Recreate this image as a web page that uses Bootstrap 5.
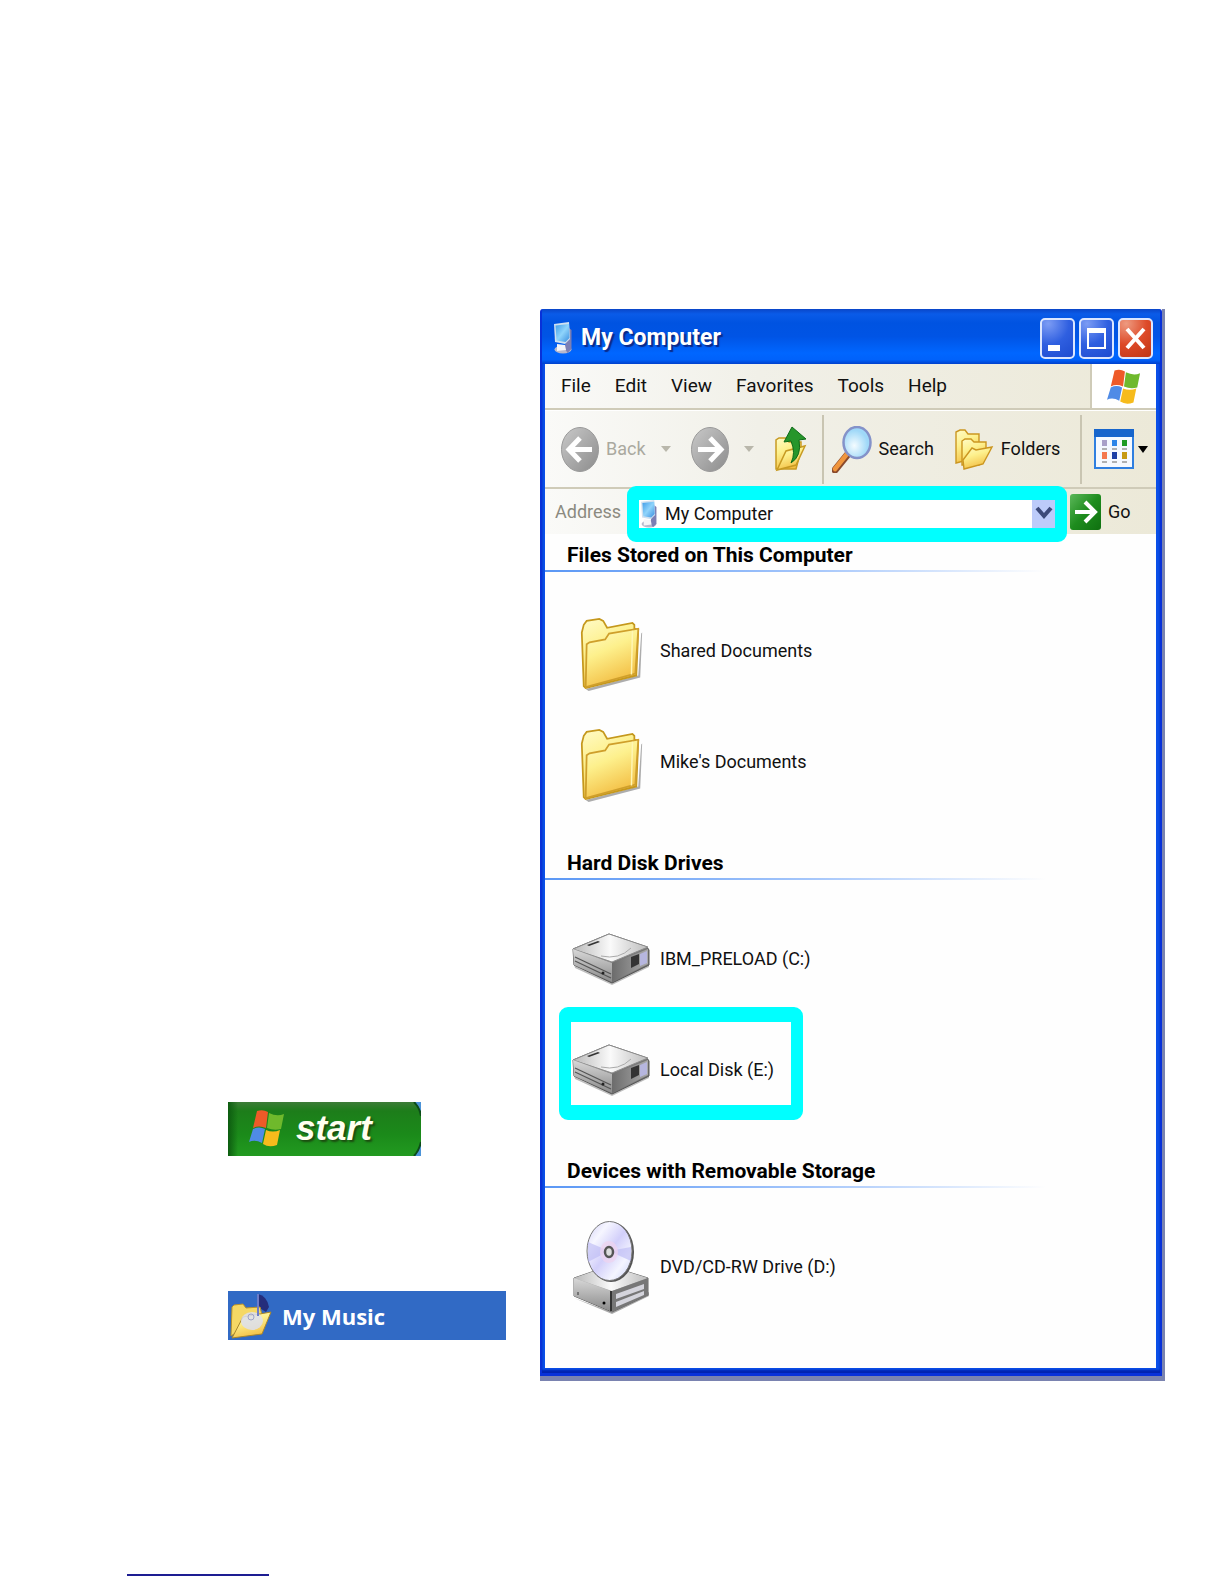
<!DOCTYPE html>
<html lang="en">
<head>
<meta charset="utf-8">
<meta name="viewport" content="width=device-width, initial-scale=1">
<title>My Computer</title>
<link href="https://cdn.jsdelivr.net/npm/bootstrap@5.3.0/dist/css/bootstrap.min.css" rel="stylesheet">
<style>
body{background:#fff;color:#111;font-family:Roboto,"Open Sans",sans-serif;font-size:18px;line-height:28px}
svg{display:block;flex:none}
.sheet{padding:309px 59px 0 228px;gap:34px}
.side{width:278px;flex:none;padding-bottom:41px;gap:135px}
.start-btn{width:193px;height:54px;padding:0 0 2px 20px;gap:10px;border:0;color:#fffff0;font:italic bold 35px/40px "Liberation Sans",sans-serif;text-shadow:2px 2px 2px #1c4a10;
 background:linear-gradient(90deg,#0d5c10 0,transparent 10px),linear-gradient(#3d7c38 0,#1d7d1a 9px,#1b8a1a 60%,#229a20);position:relative;overflow:hidden}
.music-btn{height:49px;padding:0 0 0 2px;gap:8px;border:0;background:#316ac5;color:#fff;font:bold 22px/28px "Open Sans",sans-serif}
.win{border:solid #7a83b0;border-width:0 3px 5px 0;min-width:0}
.frame{background:#0a4fe8;border:solid #0831d9;border-width:0 2px 3px 2px;padding:0 4px 5px 3px;border-radius:3px 3px 0 0;box-shadow:inset 0 -3px 2px #0023b0}
.titlebar{height:55px;padding:3px 0 0 11px;margin:0 -4px 0 -3px;border-radius:3px 3px 0 0;background:linear-gradient(#0a46c8 0,#0a5be8 5px,#0053e1 14px,#0054e5 50%,#0066ff 80%,#0062fb 92%,#0040cc)}
.titlebar h1{font:bold 23px/30px Roboto,"Open Sans",sans-serif;color:#fff;text-shadow:2px 2px 1px #0a2a8a;margin:0 0 0 8px}
.ctls{padding-right:7px}
.ctl{width:35px;height:41px;padding:0;border:2px solid #dbe6ff;border-radius:5px;background:radial-gradient(circle at 20% 10%,#7c9cf4,#2f5fe0 50%,#1d4bd0);display:flex;align-items:center;justify-content:center}
.ctl-x{background:radial-gradient(circle at 20% 10%,#ee9a80,#dd4a28 50%,#bf3515)}
.bar{background:linear-gradient(90deg,#fafaf8 0,#f1f0e8 35%,#ece9d8)}
.menu{height:46px;border-bottom:2px solid #cfcbb8}
.menu a,.tool{color:#111;text-decoration:none}
.menu nav{padding-left:16px;gap:24px;font-size:19px}
.flagbox{width:66px;background:#fff;border-left:2px solid #cfcbb8}
.tools{height:79px;border-top:1px solid #fff;border-bottom:2px solid #cfcbb8;padding-left:16px}
.tool{background:none;border:0;padding:0;gap:7px}
.far{margin-left:20px}
.near{margin-left:12px}
.views{gap:4px}
.dim{color:#aaa99f}
.rule{width:2px;height:69px;background:#c9c5b2;flex:none}
.addr{height:45px;padding-left:10px}
.addr label{color:#8b8a80;width:72px;flex:none}
.pick{margin:-3px 3px -8px 0;height:56px;border:solid #0ff;border-width:14px 12px;border-radius:9px;background:#fff;position:relative;z-index:2;min-width:0}
.pick select{appearance:none;border:0;background:none;padding:0 0 0 6px;color:#111;width:100%;min-width:0;height:28px;outline:0}
.drop{position:absolute;right:0;top:0;pointer-events:none}
.go{width:86px}
.pane{background:#fefefe;min-height:834px}
.pane h2{font-size:21px;font-weight:700;line-height:28px;height:38px;margin:0;padding:7px 0 0 22px;color:#000;background:linear-gradient(90deg,#5a97f5,#a8c8fb 45%,transparent 82%) bottom/100% 2px no-repeat}
.pane ul{list-style:none;margin:0;padding:23px 0 25px 26px}
.pane li{height:111px}
.pane li a{color:#111;text-decoration:none;gap:9px;height:111px}
.ico{width:80px;display:flex;justify-content:center;flex:none}
.hit{position:relative}
.hit::after{content:"";position:absolute;inset:-7px auto 5px -12px;border:solid #0ff;border-width:15px 12px;border-radius:9px;width:244px;pointer-events:none}
.foot{width:142px;margin:193px 0 8px 127px;border-bottom:2px solid #1d1d92}
</style>
</head>
<body>
<svg width="0" height="0" class="position-absolute" aria-hidden="true">
<defs>
<linearGradient id="gy" x1="0" y1="0" x2=".4" y2="1"><stop offset="0" stop-color="#fffbc8"/><stop offset=".45" stop-color="#fdf08c"/><stop offset="1" stop-color="#f3bf45"/></linearGradient>
<linearGradient id="gg" x1="0" y1="0" x2="1" y2="1"><stop offset="0" stop-color="#c9c9c9"/><stop offset="1" stop-color="#8c8c8c"/></linearGradient>
<linearGradient id="gt" x1="0" y1="0" x2="1" y2="0"><stop offset="0" stop-color="#b9b9b9"/><stop offset=".5" stop-color="#fafafa"/><stop offset="1" stop-color="#bcbcbc"/></linearGradient>
<linearGradient id="gl" x1="0" y1="0" x2="0" y2="1"><stop offset="0" stop-color="#d8d8d8"/><stop offset="1" stop-color="#8b8b8b"/></linearGradient>
<linearGradient id="gd" x1="0" y1="0" x2="1" y2="0"><stop offset="0" stop-color="#6c6c6c"/><stop offset="1" stop-color="#a9a9a9"/></linearGradient>
<linearGradient id="gb" x1="0" y1="0" x2="1" y2="1"><stop offset="0" stop-color="#3f9ce8"/><stop offset=".5" stop-color="#8fd4fb"/><stop offset="1" stop-color="#3a8fe0"/></linearGradient>
<linearGradient id="gn" x1="0" y1="0" x2="1" y2="1"><stop offset="0" stop-color="#5cb85a"/><stop offset=".5" stop-color="#1e8c1e"/><stop offset="1" stop-color="#0f7010"/></linearGradient>
<radialGradient id="lens" cx=".4" cy=".6"><stop offset="0" stop-color="#f4fcff"/><stop offset="1" stop-color="#9fd8f8"/></radialGradient>
<linearGradient id="disc" x1="0" y1="0" x2="1" y2="1"><stop offset="0" stop-color="#cfcdf8"/><stop offset=".25" stop-color="#f6f6ff"/><stop offset=".5" stop-color="#d2cffa"/><stop offset=".75" stop-color="#f4f5ff"/><stop offset="1" stop-color="#c9d0f8"/></linearGradient>
<symbol id="pc" viewBox="0 0 18 32"><ellipse cx="9" cy="27.500" rx="8.500" ry="4" fill="#b9b9cc"/><path d="M15 6l2.500 2v19l-4 4-3-5z" fill="#7c7fb4"/><path d="M0 2l15-2 1 17-5 5-10-2z" fill="#cfe0f0"/><path d="M1.500 3.500L15 2l.5 14-4 4-9-1.500z" fill="url(#gb)"/><path d="M3 22l8 1 1 5-9 1z" fill="#f4f4f8"/></symbol>
<symbol id="flag" viewBox="0 0 36 38"><path d="M8 2Q14 0 19 3L17 19Q10 16 4 19z" fill="#ee5a28"/><path d="M20 4Q28 8 35 5L32 20Q25 22 18 19z" fill="#6fb92c"/><path d="M4 20Q10 17 16 20L13 34Q6 30 0 33z" fill="#4f8be6"/><path d="M17 21Q24 24 31 21L28 36Q20 39 14 35z" fill="#f6bb1c"/></symbol>
<symbol id="folder" viewBox="0 0 64 76"><path d="M6 73L60 59l3-43 1-1-2 46L9 75z" fill="#777" opacity=".6"/><path d="M4 70L2 15 4 7 7 3 20 1l4 2 4 7 26-5 2 2v4l4 1-2 47L6 72z" fill="url(#gy)" stroke="#c5981d" stroke-width="1.800"/><path d="M6 71L7 27l3-2 16-3 4-6 30-5-3 46z" fill="url(#gy)" stroke="#cf9f2b" stroke-width="1.800"/><path d="M54 13l-1 45" stroke="#fff6b4" stroke-width="1.500"/></symbol>
<symbol id="disk" viewBox="0 0 80 52"><path d="M3 31l38 18 37-19v4L41 52 4 35z" fill="#444" opacity=".35"/><path d="M2 16L38 1l38 13 2 3v15L41 50 3 32z" fill="#777" stroke="#555"/><path d="M2 16L38 1l39 13-36 15z" fill="url(#gt)" stroke="#8d8d8d"/><path d="M2 16l39 14v19L3 32z" fill="url(#gl)"/><path d="M4 24l36 17M4 28l36 17" stroke="#555" stroke-width="1.300"/><path d="M41 30l36-14v15L41 49z" fill="url(#gd)"/><path d="M60 24l8-3v10l-8 4z" fill="#333"/><path d="M69 21l7-3v12l-7 3z" fill="#b6b6df"/><path d="M16 12l11-4 2 1-11 4z" fill="#333"/><path d="M30 23q18 4 30-8" stroke="#aaa" fill="none"/><circle cx="32" cy="40" r="1.500" fill="#222"/></symbol>
</defs>
</svg>

<main class="sheet d-flex">
 <section class="side d-flex flex-column justify-content-end align-items-start">
  <button class="start-btn d-flex align-items-center" type="button"><svg width="38" height="38"><use href="#flag"/></svg><span>start</span>
   <svg class="position-absolute end-0 top-0" width="10" height="54"><path d="M3 0Q9 5 10 12V0zM10 40Q8 49 3 54H10z" fill="#4c93d8"/><path d="M3 0Q9 6 10 14M10 40Q8 49 3 54" stroke="#0c4c18" fill="none" stroke-width="2"/></svg></button>
  <button class="music-btn d-flex align-items-center w-100" type="button"><svg width="44" height="46" viewBox="0 0 44 46"><path d="M28 1q9 2 11 13l-3 5-8-5z" fill="#252e7c"/><path d="M1 43L2 14l2-2 9-1 3 4 14-1 2 8z" fill="#f5d865" stroke="#b8912a"/><path d="M2 45L13 24l28-5-9 22z" fill="url(#gy)" stroke="#a8852a"/><ellipse cx="22" cy="28" rx="11" ry="9" fill="#dcdff0" opacity=".85"/><circle cx="21" cy="24" r="3" fill="none" stroke="#9ea3c8"/><path d="M28 1v22" stroke="#6c7cc8" stroke-width="2"/></svg><span>My Music</span></button>
 </section>

 <section class="win flex-grow-1"><div class="frame">
  <header class="titlebar d-flex align-items-center"><svg width="20" height="32"><use href="#pc"/></svg><h1>My Computer</h1>
   <div class="ctls d-flex gap-1 ms-auto">
    <button class="ctl" type="button" aria-label="Minimize"><svg width="31" height="37"><path d="M6 25h12v6H6z" fill="#fff"/></svg></button>
    <button class="ctl" type="button" aria-label="Maximize"><svg width="31" height="37"><path d="M6 8h19v21H6zM8 13v14h15V13z" fill="#fff" fill-rule="evenodd"/></svg></button>
    <button class="ctl ctl-x" type="button" aria-label="Close"><svg width="31" height="37"><path d="M7 9l17 19M24 9L7 28" stroke="#fff" stroke-width="4"/></svg></button>
   </div></header>
  <div class="bar menu d-flex">
   <nav class="d-flex align-items-center flex-grow-1"><a href="#">File</a><a href="#">Edit</a><a href="#">View</a><a href="#">Favorites</a><a href="#">Tools</a><a href="#">Help</a></nav>
   <div class="flagbox d-flex align-items-center justify-content-center"><svg width="34" height="37"><use href="#flag"/></svg></div>
  </div>
  <div class="bar tools d-flex align-items-center">
   <button class="tool dim d-flex align-items-center" type="button"><svg width="38" height="45" viewBox="0 0 38 45"><ellipse cx="19" cy="22.500" rx="18.500" ry="22" fill="url(#gg)" stroke="#999"/><path d="M31 22.500H9M19 11L8 22.500 19 34" stroke="#fff" stroke-width="5" fill="none"/></svg>Back<svg class="ms-2" width="10" height="7"><path d="M0 0h10L5 6z" fill="#b9b7ab"/></svg></button>
   <button class="tool dim d-flex align-items-center far" type="button" aria-label="Forward"><svg width="38" height="45" viewBox="0 0 38 45"><ellipse cx="19" cy="22.500" rx="18.500" ry="22" fill="url(#gg)" stroke="#999"/><path d="M7 22.500H29M19 11l11 11.500L19 34" stroke="#fff" stroke-width="5" fill="none"/></svg><svg class="ms-2" width="10" height="7"><path d="M0 0h10L5 6z" fill="#b9b7ab"/></svg></button>
   <button class="tool far" type="button" aria-label="Up"><svg width="36" height="46" viewBox="0 0 36 46"><path d="M2 43V14l3-2h7l3 4h12v8l-5 19z" fill="url(#gy)" stroke="#c79a22" stroke-width="1.500"/><path d="M3 44l9-19 19-5-9 19z" fill="url(#gy)" stroke="#c79a22" stroke-width="1.500"/><path d="M18 1l14 12-7 1q3 16-8 23 5-10 0-22l-7 1z" fill="#27962b" stroke="#0e6b18"/></svg></button>
   <span class="rule near"></span>
   <button class="tool d-flex align-items-center ms-2" type="button"><svg width="40" height="47" viewBox="0 0 40 47"><path d="M3 44L16 28" stroke="#8a4a2c" stroke-width="7" stroke-linecap="round"/><path d="M3 43L15 28" stroke="#f0953c" stroke-width="4.500" stroke-linecap="round"/><ellipse cx="25" cy="16.500" rx="13.500" ry="15.500" fill="url(#lens)" stroke="#8492c9" stroke-width="2.500"/></svg>Search</button>
   <button class="tool d-flex align-items-center far" type="button"><svg width="40" height="41" viewBox="0 0 40 41"><g fill="url(#gy)" stroke="#cb9620" stroke-width="1.400"><path d="M2 34V3l4-2h5l3 4h11v8L14 31z"/><path d="M8 36V12l3-2h6l3 3h12v7l-7 16z"/><path d="M10 40l-1-9 9-12 4 2 16-3-9 17z"/></g></svg>Folders</button>
   <span class="rule far"></span>
   <button class="tool views d-flex align-items-center near" type="button" aria-label="Views"><svg width="40" height="40"><path d="M1 1h38v38H1z" fill="#f5f9ff" stroke="#2f7fe0" stroke-width="2"/><path d="M0 0h40v8H0z" fill="#1765cc"/><path d="M8 11h5v6H8z" fill="#a9a0c8"/><path d="M18 11h5v6h-5z" fill="#2f86e8"/><path d="M28 11h5v6h-5z" fill="#1e9b25"/><path d="M8 23h5v7H8z" fill="#f47850"/><path d="M18 23h5v7h-5z" fill="#1b3fa6"/><path d="M28 23h5v7h-5z" fill="#c69a14"/><path d="M8 20h5m5 0h5m5 0h5M8 33h5m5 0h5m5 0h5" stroke="#999" stroke-width="1.500"/></svg><svg width="10" height="7"><path d="M0 0h10L5 7z"/></svg></button>
  </div>
  <div class="bar addr d-flex align-items-center">
   <label for="addr">Address</label>
   <div class="pick d-flex align-items-center flex-grow-1"><svg width="20" height="28"><use href="#pc"/></svg><select id="addr"><option>My Computer</option></select><svg class="drop" width="23" height="28"><path d="M0 0h23v28H0z" fill="#bccbfa"/><path d="M5 8l7 8 7-8" stroke="#3c4a7a" stroke-width="4" fill="none"/></svg></div>
   <button class="tool go d-flex align-items-center" type="button"><svg width="31" height="36"><rect width="31" height="36" rx="3" fill="url(#gn)"/><path d="M5 18h20M15 8l10 10-10 10" stroke="#fff" stroke-width="4" fill="none"/></svg>Go</button>
  </div>
  <div class="pane">
   <h2>Files Stored on This Computer</h2>
   <ul><li><a class="d-flex align-items-center" href="#"><span class="ico pt-2"><svg width="64" height="74"><use href="#folder"/></svg></span>Shared Documents</a></li>
   <li><a class="d-flex align-items-center" href="#"><span class="ico pt-2"><svg width="64" height="74"><use href="#folder"/></svg></span>Mike's Documents</a></li></ul>
   <h2>Hard Disk Drives</h2>
   <ul><li><a class="d-flex align-items-center" href="#"><span class="ico"><svg width="80" height="52"><use href="#disk"/></svg></span>IBM_PRELOAD (C:)</a></li>
   <li class="hit"><a class="d-flex align-items-center" href="#"><span class="ico"><svg width="80" height="52"><use href="#disk"/></svg></span>Local Disk (E:)</a></li></ul>
   <h2>Devices with Removable Storage</h2>
   <ul><li><a class="d-flex align-items-center" href="#"><span class="ico"><svg width="80" height="94" viewBox="0 0 80 94"><path d="M3 78l38 14 37-20v4L41 94z" fill="#555" opacity=".5"/><path d="M3 58L38 46l39 12v17L41 92 3 76z" fill="#aaa" stroke="#666"/><path d="M3 58L38 46l39 12-36 13z" fill="url(#gt)"/><path d="M3 58l37 13v20L3 76z" fill="url(#gl)"/><path d="M41 71l36-13v17L41 92z" fill="#777"/><path d="M45 74l28-10v5L45 79zM45 82l28-11v4L45 87z" fill="#d4d4dc"/><path d="M40 71v20" stroke="#333" stroke-width="2"/><circle cx="33" cy="83" r="1.500"/><path d="M7 72v3" stroke="#333"/><ellipse cx="40" cy="32" rx="23" ry="30" fill="#555"/><ellipse cx="38.500" cy="31" rx="22.500" ry="29.500" fill="url(#disc)" stroke="#777"/><path d="M38 31L17 22v20zM38 31l22-4v14z" fill="#b9b7f3" opacity=".6"/><ellipse cx="38" cy="32" rx="9" ry="11" fill="#f0d3ee" opacity=".7"/><ellipse cx="38" cy="32" rx="4" ry="5" fill="#ddd" stroke="#555" stroke-width="2.500"/></svg></span>DVD/CD-RW Drive (D:)</a></li></ul>
  </div>
 </div></section>
</main>
<footer class="foot"></footer>
<script src="https://cdn.jsdelivr.net/npm/bootstrap@5.3.0/dist/js/bootstrap.bundle.min.js"></script>
</body>
</html>
